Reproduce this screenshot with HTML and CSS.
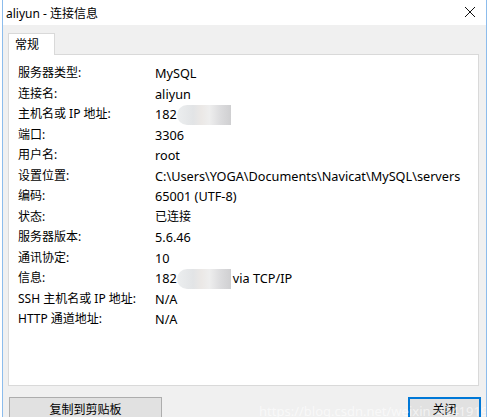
FILE: index.html
```html
<!DOCTYPE html>
<html lang="zh-CN">
	<head>
		<meta charset="UTF-8" />
		<title>aliyun - 连接信息</title>
		<link rel="stylesheet" href="styles.css">
	</head>
	<body>
		<div class="window">
			<div class="titlebar">
				<span class="title">aliyun - 连接信息</span>
				<svg class="close-x" width="12" height="12" viewBox="0 0 12 12">
					<path d="M1 1L11 11M11 1L1 11" stroke="#111" stroke-width="1" fill="none" />
				</svg>
			</div>
			<div class="content">
				<div class="tabs">
					<div class="tab">常规</div>
				</div>
				<div class="panel">
					<div class="row"><span class="label">服务器类型:</span><span class="value">MySQL</span></div>
					<div class="row"><span class="label">连接名:</span><span class="value">aliyun</span></div>
					<div class="row"><span class="label">主机名或 IP 地址:</span><span class="value">182<span class="blur"></span></span></div>
					<div class="row"><span class="label">端口:</span><span class="value">3306</span></div>
					<div class="row"><span class="label">用户名:</span><span class="value">root</span></div>
					<div class="row"><span class="label">设置位置:</span><span class="value">C:\Users\YOGA\Documents\Navicat\MySQL\servers</span></div>
					<div class="row"><span class="label">编码:</span><span class="value">65001 (UTF-8)</span></div>
					<div class="row"><span class="label">状态:</span><span class="value cjk">已连接</span></div>
					<div class="row"><span class="label">服务器版本:</span><span class="value">5.6.46</span></div>
					<div class="row"><span class="label">通讯协定:</span><span class="value">10</span></div>
					<div class="row"><span class="label">信息:</span><span class="value">182<span class="blur"></span>via TCP/IP</span></div>
					<div class="row"><span class="label">SSH 主机名或 IP 地址:</span><span class="value">N/A</span></div>
					<div class="row"><span class="label">HTTP 通道地址:</span><span class="value">N/A</span></div>
				</div>
				<div class="footer">
					<button class="btn btn-copy">复制到剪贴板</button>
					<button class="btn btn-close">关闭</button>
				</div>
			</div>
			<span class="watermark">https://blog.csdn.net/weixin_43419191</span>
		</div>
	</body>
</html>
```

FILE: styles.css
```css
body {
	margin: 0;
	overflow: hidden;
	background-color: #fff;
	font-family: "Segoe UI", "Noto Sans", "Noto Sans CJK SC", sans-serif;
	font-size: 12px;
	color: #000;
}
.window {
	position: relative;
	margin-left: 2px;
	width: 483px;
	height: 417px;
	border-left: 1px solid #8cbcec;
	border-right: 1px solid #8cbcec;
	background-color: #f0f0f0;
	overflow: hidden;
}
.titlebar {
	height: 25px;
	background-color: #fff;
	display: flex;
	align-items: center;
	justify-content: space-between;
	padding: 0 10px 0 3px;
}
.title {
	font-size: 12px;
}
.close-x {
	margin-top: -1px;
}
.content {
	padding: 8px 0 0 5px;
}
.tabs {
	display: flex;
}
.tab {
	height: 22px;
	line-height: 22px;
	padding-left: 6px;
	box-sizing: border-box;
	width: 47px;
	background-color: #fff;
	border: 1px solid #d9d9d9;
	border-bottom: none;
	margin-bottom: -1px;
	position: relative;
	z-index: 1;
}
.panel {
	width: 471px;
	height: 332px;
	box-sizing: border-box;
	background-color: #fff;
	border: 1px solid #d9d9d9;
	padding: 8px 0 0 9px;
}
.row {
	display: flex;
	height: 20.5px;
	line-height: 20.5px;
	white-space: nowrap;
}
.label {
	width: 137px;
	flex-shrink: 0;
}
.value {
	font-size: 12.7px;
}
.value.cjk {
	font-size: 12px;
}
.blur {
	display: inline-block;
	vertical-align: middle;
	width: 54px;
	height: 20px;
	margin: -2px 2px 0 0;
	border-radius: 10px 0 0 10px;
	background: linear-gradient(90deg, #eceeef 0%, #e2e4e6 30%, #ebe8e6 45%, #eeeeee 60%, #dcdcde 80%, #cfcfd1 100%);
}
.footer {
	display: flex;
	justify-content: space-between;
	padding: 11px 5px 0 1px;
}
.btn {
	height: 24px;
	font-family: inherit;
	font-size: 12px;
	background-color: #e1e1e1;
	border: 1px solid #adadad;
	padding: 0;
	color: #000;
}
.btn-copy {
	width: 153px;
}
.btn-close {
	width: 73px;
	border: 2px solid #0078d7;
}
.watermark {
	position: absolute;
	left: 256px;
	top: 402px;
	font-size: 13px;
	color: rgba(255, 255, 255, 0.6);
	white-space: nowrap;
}
```
